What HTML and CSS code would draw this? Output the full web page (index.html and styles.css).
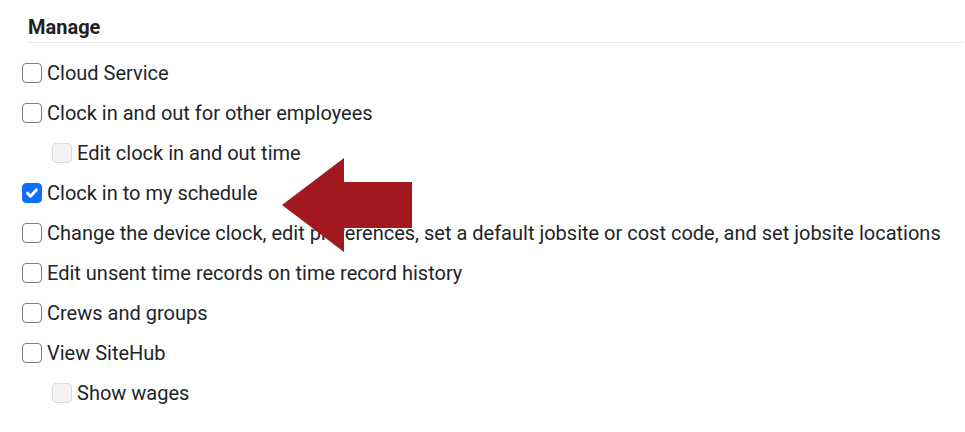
FILE: index.html
```html
<!DOCTYPE html>
<html lang="en">
<head>
    <meta charset="UTF-8">
    <title>Manage permissions</title>
    <link rel="stylesheet" href="styles.css">
</head>
<body>
    <div class="panel">
        <h3 class="panel-title">Manage</h3>

        <ul class="perm-list">
            <li class="perm"><span class="box"></span>Cloud Service</li>
            <li class="perm"><span class="box"></span>Clock in and out for other employees</li>
            <li class="perm sub"><span class="box disabled"></span>Edit clock in and out time</li>
            <li class="perm">
                <span class="box checked">
                    <svg viewBox="0 0 20 20" width="20" height="20"><path d="M5.5 10.2l3 3 6-6.4" fill="none" stroke="#fff" stroke-width="3" stroke-linecap="round" stroke-linejoin="round"/></svg>
                </span>Clock in to my schedule
            </li>
            <li class="perm"><span class="box"></span>Change the device clock, edit preferences, set a default jobsite or cost code, and set jobsite locations</li>
            <li class="perm"><span class="box"></span>Edit unsent time records on time record history</li>
            <li class="perm"><span class="box"></span>Crews and groups</li>
            <li class="perm"><span class="box"></span>View SiteHub</li>
            <li class="perm sub"><span class="box disabled"></span>Show wages</li>
        </ul>

        <svg class="callout" width="965" height="432" viewBox="0 0 965 432">
            <polygon points="282,190 344,143 344,167 412,167 412,213 344,213 344,237" fill="#a1181f"/>
        </svg>
    </div>
</body>
</html>
```

FILE: styles.css
```css
body {
    margin: 0;
    font-family: Roboto, "Liberation Sans", Arial, sans-serif;
    color: #212529;
    background-color: #ffffff;
}
.panel {
    position: relative;
    width: 965px;
    height: 432px;
}
.panel-title {
    margin: 15px 1px 0 27px;
    padding: 0 0 3px 1px;
    font-size: 20px;
    line-height: 24px;
    font-weight: 700;
    color: #222222;
    border-bottom: 1px solid #ebebeb;
}
.perm-list {
    list-style: none;
    margin: 10px 0 0 0;
    padding: 0 0 0 22px;
}
.perm {
    display: flex;
    align-items: center;
    height: 40px;
    font-size: 20px;
    line-height: 24px;
}
.perm.sub {
    padding-left: 30px;
}
.box {
    box-sizing: border-box;
    width: 20px;
    height: 20px;
    margin-right: 5px;
    border: 1px solid #7b7b7b;
    border-radius: 4px;
    background-color: #ffffff;
    flex-shrink: 0;
}
.box svg {
    display: block;
    margin: -1px;
}
.box.checked {
    background-color: #0d6efd;
    border-color: #0d6efd;
}
.box.disabled {
    background-color: #f3f3f3;
    border-color: #dadada;
}
.callout {
    position: absolute;
    left: 0;
    top: 0;
    pointer-events: none;
}
```
